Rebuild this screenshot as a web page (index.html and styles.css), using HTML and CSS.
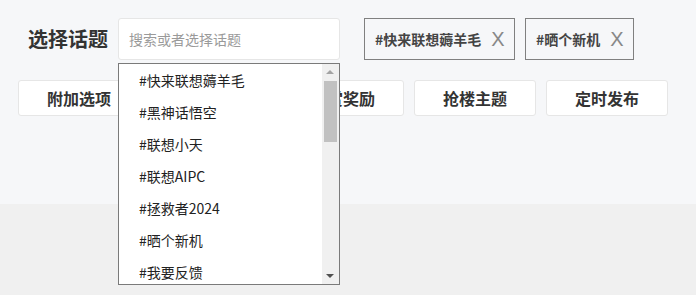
FILE: index.html
```html
<!DOCTYPE html>
<html lang="zh-CN">
<head>
<meta charset="utf-8">
<title>选择话题</title>
<link rel="stylesheet" href="styles.css">
</head>
<body>
<div class="panel">
  <div class="row-top">
    <span class="label">选择话题</span>
    <div class="search">
      <input class="search-input" type="text" placeholder="搜索或者选择话题">
      <div class="dropdown">
        <ul class="options">
          <li>#快来联想薅羊毛</li>
          <li>#黑神话悟空</li>
          <li>#联想小天</li>
          <li>#联想AIPC</li>
          <li>#拯救者2024</li>
          <li>#晒个新机</li>
          <li>#我要反馈</li>
        </ul>
        <div class="scrollbar">
          <span class="arrow arrow-up"></span>
          <span class="thumb"></span>
          <span class="arrow arrow-down"></span>
        </div>
      </div>
    </div>
    <div class="tags">
      <div class="tag tag-wide"><span class="tag-text">#快来联想薅羊毛</span><span class="tag-x">X</span></div>
      <div class="tag"><span class="tag-text">#晒个新机</span><span class="tag-x">X</span></div>
    </div>
  </div>
  <div class="row-btns">
    <button class="btn">附加选项</button>
    <button class="btn">投票帖子</button>
    <button class="btn">悬赏奖励</button>
    <button class="btn">抢楼主题</button>
    <button class="btn">定时发布</button>
  </div>
</div>
</body>
</html>
```
FILE: styles.css
```css
html, body {
  margin: 0;
  padding: 0;
}
body {
  background: #f0f0f0;
  width: 696px;
  height: 295px;
  overflow: hidden;
  font-family: "Noto Sans CJK SC", "Microsoft YaHei", sans-serif;
  color: #333;
}
.panel {
  background: #f6f7f9;
  height: 204px;
  box-sizing: border-box;
  padding: 18px 0 0 18px;
}
.row-top {
  display: flex;
  align-items: center;
  height: 42px;
  padding-left: 10px;
}
.label {
  font-size: 20px;
  font-weight: bold;
  color: #333;
  width: 80px;
  line-height: 24px;
  margin-right: 10px;
  white-space: nowrap;
}
.search {
  position: relative;
  width: 222px;
  height: 42px;
}
.search-input {
  width: 222px;
  height: 42px;
  box-sizing: border-box;
  border: 1px solid #e6e6e6;
  border-radius: 3px;
  background: #fff;
  padding: 0 0 0 10px;
  margin: 0;
  font-family: "Noto Sans CJK SC", sans-serif;
  font-size: 14px;
  color: #333;
  outline: none;
}
.search-input::placeholder {
  color: #9a9a9a;
}
.dropdown {
  position: absolute;
  top: 45px;
  left: 0;
  width: 222px;
  height: 222px;
  box-sizing: border-box;
  border: 1px solid #7a7a7a;
  background: #fff;
  display: flex;
  overflow: hidden;
  z-index: 5;
}
.options {
  list-style: none;
  margin: 0;
  padding: 0;
  flex: 1;
  overflow: hidden;
}
.options li {
  height: 32px;
  line-height: 32px;
  padding-left: 20px;
  font-size: 14px;
  color: #222;
  white-space: nowrap;
}
.scrollbar {
  position: relative;
  width: 17px;
  background: #f0f0f0;
  flex: none;
}
.thumb {
  position: absolute;
  left: 2px;
  top: 17px;
  width: 13px;
  height: 61px;
  background: #c1c1c1;
}
.arrow {
  position: absolute;
  left: 4px;
  width: 0;
  height: 0;
  border-left: 4px solid transparent;
  border-right: 4px solid transparent;
}
.arrow-up {
  top: 6px;
  border-bottom: 4px solid #a3a3a3;
}
.arrow-down {
  bottom: 6px;
  border-top: 4px solid #505050;
}
.tags {
  display: flex;
  gap: 10px;
  margin-left: 24px;
}
.tag {
  height: 42px;
  box-sizing: border-box;
  border: 1px solid #808080;
  display: flex;
  align-items: center;
  padding: 0 10px 0 10px;
  gap: 10px;
  width: 109px;
}
.tag-wide {
  width: 151px;
}
.tag-text {
  font-size: 14px;
  font-weight: bold;
  color: #444;
  white-space: nowrap;
}
.tag-x {
  font-family: "Liberation Sans", Arial, sans-serif;
  font-size: 20px;
  color: #888;
  line-height: 20px;
}
.row-btns {
  display: flex;
  gap: 10px;
  margin-top: 20px;
}
.btn {
  width: 122px;
  height: 36px;
  box-sizing: border-box;
  border: 1px solid #e6e6e6;
  border-radius: 3px;
  background: #fff;
  font-family: "Noto Sans CJK SC", sans-serif;
  font-size: 16px;
  font-weight: bold;
  color: #333;
  padding: 0;
  margin: 0;
}
```
